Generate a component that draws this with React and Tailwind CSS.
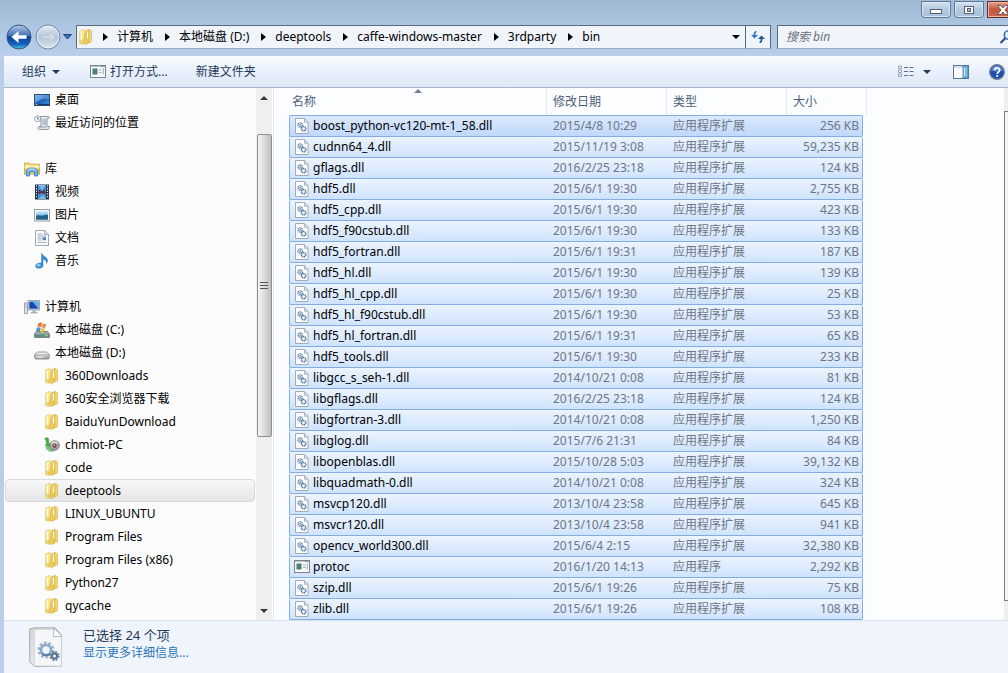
import React from "react";

const CJK = "font-['Noto_Sans','Noto_Sans_CJK_SC',sans-serif]";

/* ---------- icons ---------- */

function Defs() {
  return (
    <svg className="absolute h-0 w-0" aria-hidden="true">
      <defs>
        <linearGradient id="folderBack" x1="0" y1="0" x2="1" y2="1">
          <stop offset="0" stopColor="#fdf3b4" />
          <stop offset="1" stopColor="#f0d264" />
        </linearGradient>
        <linearGradient id="folderFront" x1="0" y1="0" x2="1" y2="0">
          <stop offset="0" stopColor="#f3d97a" />
          <stop offset="0.6" stopColor="#e6bd45" />
          <stop offset="1" stopColor="#f6e396" />
        </linearGradient>
        <linearGradient id="screen" x1="0" y1="0" x2="1" y2="1">
          <stop offset="0" stopColor="#7fb7ea" />
          <stop offset="0.5" stopColor="#1c5cb4" />
          <stop offset="1" stopColor="#3f9be6" />
        </linearGradient>
        <linearGradient id="sky" x1="0" y1="0" x2="0" y2="1">
          <stop offset="0" stopColor="#d5effc" />
          <stop offset="0.5" stopColor="#7cc1e8" />
          <stop offset="1" stopColor="#1d5f86" />
        </linearGradient>
        <linearGradient id="back" x1="0" y1="0" x2="0" y2="1">
          <stop offset="0" stopColor="#b4cbe8" />
          <stop offset="0.45" stopColor="#3f6fb8" />
          <stop offset="0.5" stopColor="#0f3f95" />
          <stop offset="0.8" stopColor="#1761bd" />
          <stop offset="1" stopColor="#53c3f4" />
        </linearGradient>
        <linearGradient id="forward" x1="0" y1="0" x2="0" y2="1">
          <stop offset="0" stopColor="#e4ebf4" />
          <stop offset="0.5" stopColor="#b4c4d9" />
          <stop offset="1" stopColor="#dbe6f2" />
        </linearGradient>
        <linearGradient id="drive" x1="0" y1="0" x2="0" y2="1">
          <stop offset="0" stopColor="#ffffff" />
          <stop offset="1" stopColor="#a4a4a8" />
        </linearGradient>
        <linearGradient id="page" x1="0" y1="0" x2="1" y2="1">
          <stop offset="0" stopColor="#d2d4d6" />
          <stop offset="1" stopColor="#fafbfc" />
        </linearGradient>
      </defs>
    </svg>
  );
}

const Icon = ({ children }) => (
  <svg className="h-4 w-4 shrink-0" viewBox="0 0 16 16" aria-hidden="true">
    {children}
  </svg>
);

const FolderIcon = () => (
  <Icon>
    <path d="M1.500 2 5 .5l2 .7v12.500l-2 1.800-3.500-1z" fill="url(#folderBack)" stroke="#dcc266" strokeWidth=".6" />
    <path d="M6.500 9.500 8 1.500l3.500-1 2 1.300v11l-2 .7-4 2-2-1.500z" fill="url(#folderFront)" stroke="#cfa93a" strokeWidth=".6" />
    <path d="M3.500 2.500v11.500M9.500 2.500v7" stroke="#fffbe0" strokeWidth="1.200" />
    <path d="M2 10.500 6.500 12v3L2.300 14z" fill="#e5c150" opacity=".65" />
  </Icon>
);

const DesktopIcon = () => (
  <Icon>
    <rect x=".5" y="2.500" width="15" height="11" fill="url(#screen)" stroke="#274a7c" />
    <path d="M1 3h14v4C9 6 5 8 1 11z" fill="#9cc8f0" opacity=".45" />
    <path d="M1 12.500h14" stroke="#173c6e" strokeWidth="1.200" />
    <path d="M1.500 12.500h2" stroke="#78d08a" />
  </Icon>
);

const RecentIcon = () => (
  <Icon>
    <path d="M6 1.500h8.500c1 0 1 2 0 2H13v8h2.500c0 2-1 3-2 3H5.500c-1.500 0-2-2-.5-3h2v-8z" fill="#e4e8ec" stroke="#858d95" strokeWidth=".9" />
    <path d="M8.500 5h3.500M8.500 7h3.500M8.500 9h3.500M5 12h7" stroke="#7d94ae" strokeWidth=".9" />
    <circle cx="3.600" cy="3.800" r="3" fill="#f3f5f7" stroke="#8d949c" strokeWidth=".8" />
    <path d="M3.600 2v2h1.600" fill="none" stroke="#4d6685" strokeWidth=".8" />
  </Icon>
);

const LibraryIcon = () => (
  <Icon>
    <path d="M.5 2h5l1 1.200h9v10H.5z" fill="#f7dc74" stroke="#c9a23c" strokeWidth=".8" />
    <path d="M.8 4.500h14.600V7H.8z" fill="#fdf2b2" />
    <path d="M2.500 15V9l3-2h5l3 2v6h-3v-4h-5v4z" fill="#6fb1e8" stroke="#3b79bd" strokeWidth=".8" />
    <path d="M4 9.500 6 8h4l2 1.500" fill="none" stroke="#d5edfb" />
    <path d="M1 8v6M14.700 8v6" stroke="#91c46a" strokeWidth=".8" />
  </Icon>
);

const VideoIcon = () => (
  <Icon>
    <rect x="1" y=".5" width="14" height="15" fill="#1f3146" />
    <path d="M4 1h8v7H4zM4 8.700h8V15H4z" fill="#4a8ed2" />
    <path d="M4 1h8L8 6zM4 15h8L9 11z" fill="#7db7e8" />
    <path d="M5 5.500l3 2 3-2v5L8 9l-3 1.500z" fill="#622f3e" />
    <path d="M2.500 1.500v13M13.500 1.500v13" stroke="#e6edf4" strokeWidth="1.100" strokeDasharray="1.300 1.300" />
  </Icon>
);

const PictureIcon = () => (
  <Icon>
    <rect x=".5" y="2.500" width="15" height="11.500" fill="#fff" stroke="#8e9aa6" />
    <rect x="2" y="4" width="12" height="8.500" fill="url(#sky)" />
    <path d="M2 9c3-2 5 .5 7-.5s3-1 5-.5v4.500H2z" fill="#226188" />
  </Icon>
);

const DocumentIcon = () => (
  <Icon>
    <path d="M1.500.5h9.200l3.800 3.800v11.200h-13z" fill="#fbfcfd" stroke="#8392a0" strokeWidth=".8" />
    <path d="M10.500.8v3.700h3.700" fill="#dbe2e8" stroke="#8392a0" strokeWidth=".7" />
    <path d="M3.500 4h5M3.500 6h8.500M3.500 8h4M3.500 10h4M3.500 12.500h9" stroke="#8397aa" strokeWidth=".8" />
    <rect x="8.500" y="7.200" width="3.500" height="3" fill="#4c86b7" />
  </Icon>
);

const MusicIcon = () => (
  <Icon>
    <path d="M7.500 0c.5 3 5.500 3.500 6 7 .2 1.600-.3 2.600-1 3.500.2-2.500-1.500-4-3.500-4.300v6.600c0 3-7.500 3.700-7.500.2C1.500 10.500 5 9.500 7.500 10z" fill="#328bd0" stroke="#2575b8" strokeWidth=".4" />
    <ellipse cx="4.600" cy="12.300" rx="2" ry="1.300" fill="#8ccdf2" />
  </Icon>
);

const ComputerIcon = () => (
  <Icon>
    <rect x=".5" y="4" width="3" height="10.500" fill="#dfe5ea" stroke="#8a949e" strokeWidth=".8" />
    <path d="M1.300 6h1.500M1.300 8h1.500" stroke="#7b8a9a" strokeWidth=".7" />
    <rect x="4" y="1.500" width="11.500" height="9.500" fill="#d5dfe9" stroke="#8797a8" strokeWidth=".8" />
    <rect x="5.300" y="2.700" width="9" height="7" fill="#1647ab" />
    <path d="M8.500 2.700h5.800v7z" fill="#62aeea" />
    <path d="M8.500 11h3v2h2v1.500h-7V13h2z" fill="#a5b7c7" />
  </Icon>
);

const DriveCIcon = () => (
  <Icon>
    <path d="M2.500 9.500h11l2 2.500v3.500H.5V12z" fill="#9da7a5" stroke="#66706e" strokeWidth=".8" />
    <path d="M1 12.500h14v2.500H1z" fill="#5a8f86" />
    <path d="M11 13.700h3" stroke="#8ff070" />
    <path d="M4.500 1C6 0 7.300.5 8.200 1.200L7 5C5.800 4.200 4.600 4.300 3.200 5z" fill="#ea7432" />
    <path d="M8.800 1.500c1.300.7 2.500.7 3.700 0l-1.200 3.900c-1.300.700-2.500.600-3.700-.1z" fill="#e2905a" />
    <path d="M3 5.700c1.400-.8 2.600-.7 3.800 0L5.700 9.500c-1.200-.7-2.500-.7-3.900 0z" fill="#4c94dc" />
    <path d="M7.400 6c1.200.7 2.400.7 3.700 0L10 9.900c-1.300.7-2.500.6-3.700-.1z" fill="#f3bf32" />
  </Icon>
);

const DriveIcon = () => (
  <Icon>
    <path d="M3.500 7h9l2.800 2.500v3c0 .8-.5 1.500-1.300 1.500H2c-.8 0-1.300-.7-1.300-1.500v-3z" fill="url(#drive)" stroke="#77797c" strokeWidth=".8" />
    <path d="M1 10h14" stroke="#9b9da0" strokeWidth=".7" />
    <path d="M3 12.200h6" stroke="#f3f3f3" />
    <circle cx="12.800" cy="12.200" r=".8" fill="#62b35a" />
  </Icon>
);

const PcIcon = () => (
  <Icon>
    <path d="M.5 1.500 4 .5c1 2 1 4 .6 6l1.900-.5L5 11 1 8l1.500-.7C2.500 5 2 3 .5 1.500z" fill="#3fb246" stroke="#2b8a35" strokeWidth=".4" />
    <path d="M1 9.500c1 4 5 6 9 5l-1-3z" fill="#78c977" />
    <circle cx="10.500" cy="8.500" r="4.800" fill="#a9a2a4" stroke="#6c696b" strokeWidth=".8" />
    <path d="M7 6.500c2-2.500 5-2 6.500 0" fill="none" stroke="#eee" strokeWidth="1.200" />
    <circle cx="10.600" cy="8.700" r="2" fill="#7a3a43" />
    <circle cx="10.300" cy="8.300" r=".8" fill="#e8dada" />
  </Icon>
);

const DllIcon = () => (
  <Icon>
    <path d="M1.500.5h9l3.500 3.500v11.500H1.500z" fill="#fcfdfe" stroke="#9aa3ac" strokeWidth=".9" />
    <path d="M10.500.7v3.500h3.400" fill="#e3e8ed" stroke="#9aa3ac" strokeWidth=".8" />
    <circle cx="6.200" cy="7" r="2.300" fill="#d3e2f1" stroke="#5f7c9d" strokeWidth="1.100" strokeDasharray="1.300 .5" />
    <circle cx="6.200" cy="7" r=".8" fill="#56759a" />
    <circle cx="9.600" cy="10.700" r="2.300" fill="#d3e2f1" stroke="#43668f" strokeWidth="1.200" strokeDasharray="1.300 .5" />
    <circle cx="9.600" cy="10.700" r=".7" fill="#fff" />
  </Icon>
);

const AppIcon = () => (
  <Icon>
    <rect x=".5" y="1.500" width="15" height="12" fill="#f7f9fb" stroke="#7a858f" />
    <path d="M1 2.500h14" stroke="#b9c4ce" />
    <rect x="2.500" y="4.500" width="5" height="6" fill="#4c806f" />
    <path d="M9 6h2.500M9 8.500h2.500" stroke="#a3a9af" />
    <path d="M13.300 4v6.500" stroke="#a3a9af" />
    <path d="M11 2.500h3.500" stroke="#6d7f92" strokeDasharray="1 .6" />
  </Icon>
);

const GearsFile = () => (
  <svg className="h-10 w-9 shrink-0" viewBox="0 0 36 40" aria-hidden="true">
    <path d="M.5 2 6 .8h20L32.500 8v31L6 39.500.8 35z" fill="url(#page)" stroke="#9a9da0" strokeWidth=".8" />
    <path d="M5.500 2.500h19.500l7.500 7V39H5.500z" fill="#f5f6f7" stroke="#c6c9cc" strokeWidth=".6" />
    <path d="M25 1 24.500 9.500h8.500z" fill="#fff" stroke="#a6a9ac" strokeWidth=".8" />
    <circle cx="17" cy="23" r="7" fill="none" stroke="#9bb4cc" strokeWidth="3" strokeDasharray="2.600 1.800" />
    <circle cx="17" cy="23" r="5" fill="#f1f6fa" stroke="#89a9c8" strokeWidth="2.600" />
    <path d="M13 26.500c2 2.500 5.500 2.500 8 .3" fill="none" stroke="#55789c" strokeWidth="1.600" />
    <circle cx="25.500" cy="29" r="4" fill="none" stroke="#6b88a6" strokeWidth="2.200" strokeDasharray="1.900 1.250" />
    <circle cx="25.500" cy="29" r="2.500" fill="#edf3f8" stroke="#56718f" strokeWidth="1.800" />
  </svg>
);

const DownArrow = ({ className = "" }) => (
  <svg className={`h-1 w-2 shrink-0 ${className}`} viewBox="0 0 8 4" aria-hidden="true">
    <path d="M0 0h8L4 4z" fill="currentColor" />
  </svg>
);

const UpArrow = ({ className = "" }) => (
  <svg className={`h-1 w-2 shrink-0 ${className}`} viewBox="0 0 8 4" aria-hidden="true">
    <path d="M0 4h8L4 0z" fill="currentColor" />
  </svg>
);

/* ---------- data ---------- */

const tree = [
  { label: "桌面", icon: DesktopIcon, level: 1 },
  { label: "最近访问的位置", icon: RecentIcon, level: 1 },
  null,
  { label: "库", icon: LibraryIcon, level: 0 },
  { label: "视频", icon: VideoIcon, level: 1 },
  { label: "图片", icon: PictureIcon, level: 1 },
  { label: "文档", icon: DocumentIcon, level: 1 },
  { label: "音乐", icon: MusicIcon, level: 1 },
  null,
  { label: "计算机", icon: ComputerIcon, level: 0 },
  { label: "本地磁盘 (C:)", icon: DriveCIcon, level: 1 },
  { label: "本地磁盘 (D:)", icon: DriveIcon, level: 1 },
  { label: "360Downloads", icon: FolderIcon, level: 2 },
  { label: "360安全浏览器下载", icon: FolderIcon, level: 2 },
  { label: "BaiduYunDownload", icon: FolderIcon, level: 2 },
  { label: "chmiot-PC", icon: PcIcon, level: 2 },
  { label: "code", icon: FolderIcon, level: 2 },
  { label: "deeptools", icon: FolderIcon, level: 2, selected: true },
  { label: "LINUX_UBUNTU", icon: FolderIcon, level: 2 },
  { label: "Program Files", icon: FolderIcon, level: 2 },
  { label: "Program Files (x86)", icon: FolderIcon, level: 2 },
  { label: "Python27", icon: FolderIcon, level: 2 },
  { label: "qycache", icon: FolderIcon, level: 2 },
];

const indent = ["pl-[18px]", "pl-7", "pl-[38px]"];

const files = [
  ["boost_python-vc120-mt-1_58.dll", "2015/4/8 10:29", "256 KB"],
  ["cudnn64_4.dll", "2015/11/19 3:08", "59,235 KB"],
  ["gflags.dll", "2016/2/25 23:18", "124 KB"],
  ["hdf5.dll", "2015/6/1 19:30", "2,755 KB"],
  ["hdf5_cpp.dll", "2015/6/1 19:30", "423 KB"],
  ["hdf5_f90cstub.dll", "2015/6/1 19:30", "133 KB"],
  ["hdf5_fortran.dll", "2015/6/1 19:31", "187 KB"],
  ["hdf5_hl.dll", "2015/6/1 19:30", "139 KB"],
  ["hdf5_hl_cpp.dll", "2015/6/1 19:30", "25 KB"],
  ["hdf5_hl_f90cstub.dll", "2015/6/1 19:30", "53 KB"],
  ["hdf5_hl_fortran.dll", "2015/6/1 19:31", "65 KB"],
  ["hdf5_tools.dll", "2015/6/1 19:30", "233 KB"],
  ["libgcc_s_seh-1.dll", "2014/10/21 0:08", "81 KB"],
  ["libgflags.dll", "2016/2/25 23:18", "124 KB"],
  ["libgfortran-3.dll", "2014/10/21 0:08", "1,250 KB"],
  ["libglog.dll", "2015/7/6 21:31", "84 KB"],
  ["libopenblas.dll", "2015/10/28 5:03", "39,132 KB"],
  ["libquadmath-0.dll", "2014/10/21 0:08", "324 KB"],
  ["msvcp120.dll", "2013/10/4 23:58", "645 KB"],
  ["msvcr120.dll", "2013/10/4 23:58", "941 KB"],
  ["opencv_world300.dll", "2015/6/4 2:15", "32,380 KB"],
  ["protoc", "2016/1/20 14:13", "2,292 KB"],
  ["szip.dll", "2015/6/1 19:26", "75 KB"],
  ["zlib.dll", "2015/6/1 19:26", "108 KB"],
];

const crumbs = ["计算机", "本地磁盘 (D:)", "deeptools", "caffe-windows-master", "3rdparty", "bin"];

/* ---------- parts ---------- */

function TitleBar() {
  return (
    <div className="-mr-6 flex h-[25px] items-start justify-end gap-[3px]">
      <button aria-label="最小化" className="mt-px flex h-[17px] w-[30px] items-center justify-center rounded-b-sm border border-[#5f7894] bg-linear-to-b from-[#d7e3f0] via-[#b3c8df] to-[#a9c1dc] shadow-[inset_0_0_0_1px_#dbe7f4]">
        <svg className="h-3 w-3" viewBox="0 0 12 12" aria-hidden="true">
          <rect x=".5" y="5.500" width="11" height="4" fill="#fff" stroke="#56616e" />
        </svg>
      </button>
      <button aria-label="最大化" className="mt-px flex h-[17px] w-[30px] items-center justify-center rounded-b-sm border border-[#5f7894] bg-linear-to-b from-[#d7e3f0] via-[#b3c8df] to-[#a9c1dc] shadow-[inset_0_0_0_1px_#dbe7f4]">
        <svg className="h-3 w-3" viewBox="0 0 12 12" aria-hidden="true">
          <rect x="1.500" y="2.500" width="9" height="7" fill="#fff" stroke="#56616e" />
          <rect x="4.500" y="4.500" width="3" height="3" fill="#a9bdd4" stroke="#56616e" />
        </svg>
      </button>
      <button aria-label="关闭" className="mt-px flex h-[17px] w-[45px] items-center border border-[#6b2a22] bg-linear-to-b from-[#e0a392] via-[#c4553c] to-[#c8694e] pl-2 shadow-[inset_0_0_0_1px_#e9b7a9]">
        <svg className="h-3 w-3.5" viewBox="0 0 14 12" aria-hidden="true">
          <path d="M1.500 1.500h3.500L7 4l2-2.500h3.500L9 6l3.500 4.500H9L7 8l-2 2.500H1.500L5 6z" fill="#fff" stroke="#5a4a50" strokeWidth=".9" />
        </svg>
      </button>
    </div>
  );
}

function AddressBar() {
  return (
    <div className="-mr-3 flex h-[31px] items-start pl-[6px]">
      <div className="flex h-6 w-[70px] shrink-0 items-center">
        <button aria-label="后退" className="shrink-0">
          <svg className="h-[26px] w-[26px]" viewBox="0 0 26 26" aria-hidden="true">
            <circle cx="13" cy="13" r="12" fill="url(#back)" stroke="#37577f" />
            <path d="M5.500 13 12.500 7v4.300h8v3.400h-8V19z" fill="#fff" />
          </svg>
        </button>
        <button aria-label="前进" className="ml-[3px] shrink-0">
          <svg className="h-[26px] w-[26px]" viewBox="0 0 26 26" aria-hidden="true">
            <circle cx="13" cy="13" r="12" fill="url(#forward)" stroke="#7288a3" />
            <circle cx="13" cy="13" r="10.800" fill="none" stroke="#eef4fa" strokeWidth=".8" />
            <path d="M20.500 13 14.500 8v3.500H7v3h7.500V18z" fill="#cfdae7" stroke="#b4c2d3" strokeWidth=".5" />
          </svg>
        </button>
        <button aria-label="最近的页面" className="ml-px shrink-0">
          <svg className="h-2 w-3" viewBox="0 0 12 8" aria-hidden="true">
            <path d="M1.500 1.500h8L5.500 6z" fill="#3f6fb4" stroke="#1f4478" />
          </svg>
        </button>
      </div>
      <nav aria-label="地址" className="flex h-6 min-w-0 flex-1 items-center border border-[#5a6a7e] border-b-[#9aaec4] bg-[#f0f5fb] pl-px">
        <FolderIcon />
        {crumbs.map((c) => (
          <React.Fragment key={c}>
            <svg className="ml-[9px] h-2 w-[5px] shrink-0" viewBox="0 0 5 8" aria-hidden="true">
              <path d="M0 0v8l5-4z" fill="#000" />
            </svg>
            <button className="ml-[9px] whitespace-nowrap pr-[3px]">{c}</button>
          </React.Fragment>
        ))}
        <button aria-label="以前的位置" className="mr-[5px] ml-auto">
          <DownArrow />
        </button>
      </nav>
      <button aria-label="刷新" className="flex h-6 w-[25px] shrink-0 items-center justify-center border border-l-0 border-[#5a6a7e] border-b-[#9aaec4] bg-[#f0f5fb]">
        <svg className="h-4 w-4" viewBox="0 0 16 16" aria-hidden="true">
          <path d="M6.500 2.500C4.500 3 4.500 4 4.500 7" fill="none" stroke="#2f7ac6" strokeWidth="1.800" />
          <path d="M1 6h7L4.500 9.500z" fill="#2f7ac6" />
          <path d="M9.500 13.500c2-.5 2-1.500 2-4.500" fill="none" stroke="#1e549c" strokeWidth="1.800" />
          <path d="M8 10h7L11.500 6.500z" fill="#1e549c" />
        </svg>
      </button>
      <label className="ml-[6px] flex h-6 w-[243px] shrink-0 items-center border border-[#5a6a7e] border-b-[#9aaec4] bg-[#f0f5fb] pr-1 pl-2">
        <input type="text" aria-label="搜索 bin" placeholder="搜索 bin" className="min-w-0 flex-1 bg-transparent italic outline-none placeholder:text-[#6b7178]" />
        <svg className="h-4 w-4 shrink-0" viewBox="0 0 16 16" aria-hidden="true">
          <circle cx="9.500" cy="6" r="4.200" fill="#e6f2fc" stroke="#3a6db0" strokeWidth="1.600" />
          <path d="M6.500 9 1.500 14" stroke="#2b5186" strokeWidth="2.200" />
        </svg>
      </label>
    </div>
  );
}

function Toolbar() {
  return (
    <div className="flex h-8 items-center border-b border-[#a3b9d0] bg-linear-to-b from-[#fafcfe] via-[#e9f0fb] to-[#dde7f5] pr-[7px] pl-[18px] text-[#1e395b]">
      <button className="flex items-center gap-[6px]">
        组织 <DownArrow />
      </button>
      <button className="ml-[30px] flex items-center gap-1">
        <AppIcon />
        打开方式...
      </button>
      <button className="ml-7">新建文件夹</button>
      <div className="ml-auto flex items-center">
        <button aria-label="更改您的视图">
          <svg className="h-4 w-4" viewBox="0 0 16 16" aria-hidden="true">
            <path d="M.5 2h3v2.500h-3zM.5 6h3v2.500h-3zM.5 10h3v2.500h-3z" fill="none" stroke="#8796a8" strokeWidth=".8" />
            <path d="M6 3.500h4M6 7.500h4M6 11.500h4M11.500 3.500h4M11.500 7.500h4M11.500 11.500h4" stroke="#5e718a" />
          </svg>
        </button>
        <button aria-label="更多选项" className="ml-[9px]">
          <DownArrow />
        </button>
        <button aria-label="显示预览窗格" className="ml-[22px]">
          <svg className="h-4 w-4" viewBox="0 0 16 16" aria-hidden="true">
            <rect x=".5" y="1.500" width="15" height="13" fill="#fff" stroke="#54779c" />
            <path d="M1 3h9" stroke="#a8bfd6" />
            <rect x="10" y="2" width="5" height="12" fill="#79bce0" stroke="#3c78a5" strokeWidth=".8" />
            <path d="M11.500 4v8" stroke="#c5e6f6" strokeWidth="1.200" />
          </svg>
        </button>
        <button aria-label="获取帮助" className="-mr-1 ml-5">
          <svg className="h-4 w-4" viewBox="0 0 16 16" aria-hidden="true">
            <circle cx="8" cy="8" r="7.400" fill="#1f4fae" stroke="#7b8796" strokeWidth="1.200" />
            <path d="M2 6.500a6.200 6.200 0 0 1 12 0C11 8 5 8 2 6.500z" fill="#6f9be0" opacity=".7" />
            <path d="M5.600 6.300c0-3.200 5-3.200 5 0 0 1.800-2.400 1.800-2.400 3.700" fill="none" stroke="#fff" strokeWidth="1.700" />
            <circle cx="8.200" cy="12" r="1.100" fill="#fff" />
          </svg>
        </button>
      </div>
    </div>
  );
}

function Tree() {
  return (
    <nav aria-label="导航窗格" className="min-w-0 flex-1 bg-[#fcfcfd] px-px">
      <ul>
        {tree.map((n, i) =>
          n ? (
            <li key={n.label}>
              <a
                href="#"
                className={`flex h-[23px] items-center gap-[5px] whitespace-nowrap rounded-sm border ${indent[n.level]} ${
                  n.selected ? "border-[#d9d9d9] bg-linear-to-b from-[#f8f8f8] to-[#e5e5e5]" : "border-transparent"
                }`}
              >
                <n.icon />
                {n.label}
              </a>
            </li>
          ) : (
            <li key={i} className="h-[23px]" aria-hidden="true" />
          )
        )}
      </ul>
    </nav>
  );
}

function TreeScrollbar() {
  return (
    <div className="flex w-4 shrink-0 flex-col items-center bg-[#efeff0]" aria-hidden="true">
      <div className="flex h-[46px] pt-2 text-[#3c3c3c]">
        <UpArrow />
      </div>
      <div className="flex h-[303px] w-[15px] flex-col items-center justify-center gap-[2px] rounded-xs border border-[#8f8f8f] bg-linear-to-r from-[#f4f4f4] via-[#dcdcdd] to-[#bebfc2]">
        <i className="h-px w-2 bg-[#555]" />
        <i className="h-px w-2 bg-[#555]" />
        <i className="h-px w-2 bg-[#555]" />
      </div>
      <div className="mt-auto pb-[7px] text-[#3c3c3c]">
        <DownArrow />
      </div>
    </div>
  );
}

function FileTable() {
  const head =
    "relative h-[27px] border-l border-[#e4e9ee] pl-[6px] text-left font-normal text-[#4c607a]";
  return (
    <table className="w-[574px] table-fixed border-separate border-spacing-0">
      <colgroup>
        <col className="w-[257px]" />
        <col className="w-[120px]" />
        <col className="w-[120px]" />
        <col />
      </colgroup>
      <thead>
        <tr>
          <th aria-sort="ascending" className="relative h-[27px] pl-[3px] text-left font-normal text-[#4c607a]">
            名称
            <span className="absolute inset-x-0 top-px flex justify-center">
              <UpArrow className="text-[#6e7f92]" />
            </span>
          </th>
          <th className={head}>修改日期</th>
          <th className={head}>类型</th>
          <th className={`${head} after:absolute after:inset-y-0 after:-right-1 after:w-px after:bg-[#e4e9ee]`}>大小</th>
        </tr>
      </thead>
      <tbody>
        {files.map(([name, date, size], i) => {
          const cell = `border-b border-[#84acdd] p-0 whitespace-nowrap bg-linear-to-b ${
            i === 0
              ? "h-[22px] border-t border-t-[#84acdd] from-[#dce9fd] to-[#bfd8fb]"
              : "h-[21px] from-[#ecf4fe] to-[#cfe3fe]"
          }`;
          return (
            <tr key={name} aria-selected="true">
              <td className={`${cell} rounded-l-xs border-l`}>
                <div className="flex h-5 items-center gap-[3px] pl-1">
                  {name === "protoc" ? <AppIcon /> : <DllIcon />}
                  {name}
                </div>
              </td>
              <td className={`${cell} pl-[7px] text-[#6d7684]`}>{date}</td>
              <td className={`${cell} pl-[7px] text-[#6d7684]`}>{name === "protoc" ? "应用程序" : "应用程序扩展"}</td>
              <td className={`${cell} rounded-r-xs border-r pr-[3px] text-right text-[#6d7684]`}>{size}</td>
            </tr>
          );
        })}
      </tbody>
    </table>
  );
}

export default function App() {
  return (
    <div className={`relative flex min-h-screen flex-col overflow-hidden bg-[#b9cfe9] text-xs leading-4 text-black ${CJK}`}>
      <Defs />
      <header className="bg-linear-to-b from-[#9fb8d3] via-[#adc6e2] to-[#b9cfec]">
        <TitleBar />
        <AddressBar />
      </header>
      <div className="flex flex-1 flex-col pl-1">
        <Toolbar />
        <main className="flex bg-[#fcfdfe]">
          <div className="flex w-[268px] shrink-0">
            <Tree />
            <TreeScrollbar />
          </div>
          <div className="ml-px w-px shrink-0 bg-[#dfe6ee]" />
          <section aria-label="文件" className="min-w-0 flex-1 pl-[15px]">
            <FileTable />
          </section>
          <div className="w-1 shrink-0 bg-[#efeff0] pt-[23px]" aria-hidden="true">
            <div className="h-[490px] border-y border-l border-[#7f7f7f] bg-[#f4f4f4]" />
          </div>
        </main>
        <footer className="flex flex-1 items-start gap-[18px] border-t border-[#d6e3ef] bg-[#f0f4fc] px-[25px] pt-[6px]">
          <GearsFile />
          <div className="flex flex-col gap-[2px] text-[#1e395b]">
            <p className="text-[13px] leading-4">已选择 24 个项</p>
            <a href="#" className="text-[#2a75b8]">显示更多详细信息...</a>
          </div>
        </footer>
      </div>
    </div>
  );
}
